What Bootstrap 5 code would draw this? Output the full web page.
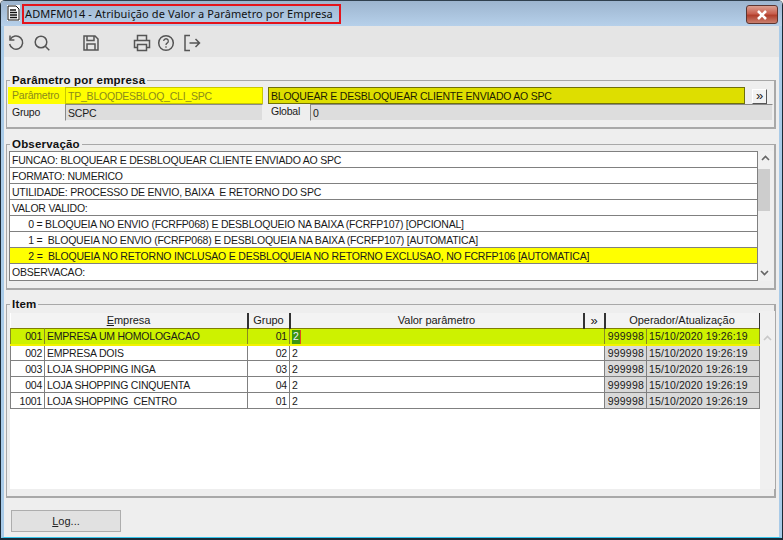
<!DOCTYPE html>
<html lang="pt">
<head>
<meta charset="utf-8">
<title>ADMFM014</title>
<link href="https://cdn.jsdelivr.net/npm/bootstrap@5.3.0/dist/css/bootstrap.min.css" rel="stylesheet">
<style>
html,body{margin:0;padding:0;width:783px;height:540px;overflow:hidden;background:#eee}
body{font-family:"Liberation Sans",Arial,sans-serif;font-size:10.5px;letter-spacing:-.22px;line-height:13px;color:#1a1a1a}
.win{width:783px;height:540px;border:1px solid #1c2a36;border-top-color:#30404e;border-bottom-width:2px;border-radius:5px 5px 0 0;background:#eee;overflow:hidden}
.frame{height:100%;border-left:3px solid #a9cbe8;border-right:3px solid #a9cbe8;border-bottom:1px solid #35c3ea;background:#eee}
.tbar{height:25px;margin:0 -3px;background:linear-gradient(#9db5cf,#b6d0ea);padding:3px 4px 0 6px}
.apic{width:13px;height:16px;background:#fff;margin:1px 2px 0 0}
.ttl{border:2px solid #e4141c;font:11px/15px "Noto Sans",sans-serif;letter-spacing:.1px;color:#111;padding:0 4px 0 1px;height:20px;width:319px;white-space:nowrap}
.xbtn{width:32px;height:19px;margin-top:1px;border:1px solid #5c3530;border-radius:3px;background:linear-gradient(#dba091 0,#c9604f 45%,#b13f2c 55%,#c9806f 100%);color:#fff}
.tools{height:31px;background:#e5e5e5;padding:8px 0 0 3px}
.tools svg{display:block;stroke:#555;fill:none;stroke-width:1.5}
.tb1{margin-right:8px}.tb2{margin-left:31px}.tb3{margin-left:33px}.tb4{margin-left:6px}.tb5{margin-left:8px}
.grp{margin:17px 3px 0 2px;padding:0 1px 1px 1px;border:2px solid #a8a8a8;border-width:1px 2px 2px 1px;min-width:0}
.grp legend{float:none;width:auto;font:bold 11.5px/13px "Liberation Sans",sans-serif;letter-spacing:.2px;color:#111;margin:0 0 0 2px;padding:0 2px}
.g1{height:55px}
.fr{height:17px}
.lbl{width:57px;padding-left:4px;line-height:16px}
.hlb{background:#ff0;color:#8b8b1a}
.fld{height:17px;border:1px solid #8a8a8a;border-bottom-color:#eee;border-right-color:#eee;padding:1px 2px;line-height:15px;background:#ddd;white-space:nowrap}
.f1{width:198px}.f2{width:477px;margin-left:5px;background:#dede00;border-color:#70700a;color:#1d1d00}
.yl{background:#ff0;color:#8b8b1a;border-color:#c8c800}
.mbtn{width:15px;height:15px;margin:2px 0 0 7px;background:#f2f2f2;border:1px solid #fff;border-right-color:#555;border-bottom-color:#555;line-height:11px;text-align:center;font-size:13px}
.glb{width:39px;margin-left:8px;line-height:15px}.f3{width:463px}
.g2{height:152px;margin-top:9px}
.g3{height:200px;margin-top:8px}
.obs{width:751px;margin-left:1px;border:1px solid #808080;border-collapse:collapse;table-layout:fixed;background:#fff}
.obs td{height:16px;padding:0 2px;border-bottom:1px solid #808080;line-height:14px;white-space:pre}
.obs tr:last-child td{height:17px;border-bottom:0}
.hlrow td{background:#ff0;letter-spacing:-.2px}
.sbar{width:15px;background:#f0f0f0;position:relative}
.thumb{position:absolute;left:0;right:3px;top:18px;height:42px;background:#cdcdcd}
.sbar svg{display:block;margin:4px auto 0;stroke:#666;fill:none;stroke-width:1.6}
.sdn{position:absolute;bottom:5px;left:2px}
.gridw{margin:2px 0 0 2px;height:176px;background:#fff;width:750px}
.dg{border-collapse:collapse;table-layout:fixed;width:749px}
.dg th{height:15px;background:#f3f3f3;font-weight:400;text-align:center;border-right:2px solid #333;padding:1px 0 0;font-size:11px;letter-spacing:-.05px;line-height:13px}
.dg th.more{font-size:13px;padding:0}
.dg td{height:16px;padding:1px 2px 0;border:1px solid #808080;line-height:13px;white-space:pre}
.dg td.ar{text-align:right}
.dg td.gy{background:#d9d9d9;letter-spacing:.12px}
.dg td.ar.gy{letter-spacing:.2px}
.sel td,.sel td.gy{background:#cdf200;border-top:1px solid #807f00;border-bottom:2px solid #f2f200;border-left-color:#8a8a20;border-right-color:#8a8a20}
.cur{background:#3a9510;color:#eef;border-right:1px solid #e04a20;padding:0 1px;display:inline-block;height:14px}
.logb{width:110px;height:22px;margin:12px 0 0 7px;background:#e1e1e1;border:1px solid #adadad;line-height:19px;text-align:center;border-radius:0;padding:0;font-size:11px;letter-spacing:0;color:#222}
</style>
</head>
<body>
<div class="win"><div class="frame d-flex flex-column">
  <div class="tbar d-flex align-items-start">
    <div class="apic d-flex"><svg width="13" height="16" viewBox="0 0 13 16"><path d="M1 1h8l3 3v11H1z" fill="#fff" stroke="#111"/><path d="M3 5h6M3 7.5h7M3 10h7M3 12.5h7" stroke="#111" stroke-width="1.4"/></svg></div>
    <div class="ttl">ADMFM014 - Atribuição de Valor a Parâmetro por Empresa</div>
    <div class="flex-grow-1"></div>
    <div class="xbtn d-flex align-items-center justify-content-center"><svg width="12" height="10" viewBox="0 0 12 10"><path d="M2 1l8 8M10 1L2 9" stroke="#fff" stroke-width="2.6"/></svg></div>
  </div>
  <div class="tools d-flex align-items-start">
    <svg class="tb1" width="18" height="18" viewBox="0 0 18 18"><path d="M3.2 5.5A6.6 6.6 0 1 1 2.6 10"/><path d="M3 1.5v4.4h4.4"/></svg>
    <svg width="18" height="18" viewBox="0 0 18 18"><circle cx="8" cy="8" r="5.8"/><path d="M12.3 12.3l4 4"/></svg>
    <svg class="tb2" width="18" height="18" viewBox="0 0 18 18"><path d="M2 2h11l3 3v11H2z"/><path d="M5 2v4.5h7V2M5 16v-6h8v6"/></svg>
    <svg class="tb3" width="18" height="18" viewBox="0 0 18 18"><path d="M4.5 6V1.5h9V6M4.5 13.500H1.500V6.500h15v7h-3"/><path d="M4.500 10.500h9v6h-9z"/></svg>
    <svg class="tb4" width="18" height="18" viewBox="0 0 18 18"><circle cx="9" cy="9" r="7.300"/><path d="M6.700 7a2.300 2.300 0 1 1 3.400 2.100c-.8.500-1.100.9-1.100 1.900" stroke-width="1.300"/><path d="M9 12.300v1.500" stroke-width="1.300"/></svg>
    <svg class="tb5" width="18" height="18" viewBox="0 0 18 18"><path d="M7 1.500H2v15h5"/><path d="M6.500 9H16.500M12.500 5l4 4-4 4"/></svg>
  </div>

  <fieldset class="grp g1">
    <legend>Parâmetro por empresa</legend>
    <div class="fr d-flex">
      <div class="lbl hlb">Parâmetro</div>
      <div class="fld f1 yl">TP_BLOQDESBLOQ_CLI_SPC</div>
      <div class="fld f2">BLOQUEAR E DESBLOQUEAR CLIENTE ENVIADO AO SPC</div>
      <div class="mbtn">»</div>
    </div>
    <div class="fr d-flex">
      <div class="lbl">Grupo</div>
      <div class="fld f1">SCPC</div>
      <div class="glb">Global</div>
      <div class="fld f3">0</div>
    </div>
  </fieldset>

  <fieldset class="grp g2">
    <legend>Observação</legend>
    <div class="d-flex">
      <table class="obs"><tbody>
        <tr><td>FUNCAO: BLOQUEAR E DESBLOQUEAR CLIENTE ENVIADO AO SPC</td></tr>
        <tr><td>FORMATO: NUMERICO</td></tr>
        <tr><td>UTILIDADE: PROCESSO DE ENVIO, BAIXA  E RETORNO DO SPC</td></tr>
        <tr><td>VALOR VALIDO:</td></tr>
        <tr><td>      0 = BLOQUEIA NO ENVIO (FCRFP068) E DESBLOQUEIO NA BAIXA (FCRFP107) [OPCIONAL]</td></tr>
        <tr><td>      1 =  BLOQUEIA NO ENVIO (FCRFP068) E DESBLOQUEIA NA BAIXA (FCRFP107) [AUTOMATICA]</td></tr>
        <tr class="hlrow"><td>      2 =  BLOQUEIA NO RETORNO INCLUSAO E DESBLOQUEIA NO RETORNO EXCLUSAO, NO FCRFP106 [AUTOMATICA]</td></tr>
        <tr><td>OBSERVACAO:</td></tr>
      </tbody></table>
      <div class="sbar flex-shrink-0">
        <div class="thumb"></div>
        <svg width="9" height="6" viewBox="0 0 9 6"><path d="M1 5l3.500-3.500L8 5"/></svg>
        <svg class="sdn" width="9" height="6" viewBox="0 0 9 6"><path d="M1 1l3.500 3.500L8 1"/></svg>
      </div>
    </div>
  </fieldset>

  <fieldset class="grp g3">
    <legend>Item</legend>
    <div class="d-flex">
      <div class="gridw flex-shrink-0">
        <table class="dg">
          <colgroup><col style="width:34px"><col style="width:203px"><col style="width:42px"><col style="width:294px"><col style="width:21px"><col style="width:42px"><col style="width:113px"></colgroup>
          <thead><tr><th colspan="2"><u>E</u>mpresa</th><th>Grupo</th><th>Valor parâmetro</th><th class="more">»</th><th colspan="2">Operador/Atualização</th></tr></thead>
          <tbody>
            <tr class="sel"><td class="ar">001</td><td>EMPRESA UM HOMOLOGACAO</td><td class="ar">01</td><td colspan="2"><span class="cur">2</span></td><td class="gy ar">999998</td><td class="gy">15/10/2020 19:26:19</td></tr>
            <tr><td class="ar">002</td><td>EMPRESA DOIS</td><td class="ar">02</td><td colspan="2">2</td><td class="gy ar">999998</td><td class="gy">15/10/2020 19:26:19</td></tr>
            <tr><td class="ar">003</td><td>LOJA SHOPPING INGA</td><td class="ar">03</td><td colspan="2">2</td><td class="gy ar">999998</td><td class="gy">15/10/2020 19:26:19</td></tr>
            <tr><td class="ar">004</td><td>LOJA SHOPPING CINQUENTA</td><td class="ar">04</td><td colspan="2">2</td><td class="gy ar">999998</td><td class="gy">15/10/2020 19:26:19</td></tr>
            <tr><td class="ar">1001</td><td>LOJA SHOPPING  CENTRO</td><td class="ar">01</td><td colspan="2">2</td><td class="gy ar">999998</td><td class="gy">15/10/2020 19:26:19</td></tr>
          </tbody>
        </table>
      </div>
      <div class="sbar flex-shrink-0"><svg class="mt-4" width="9" height="6" viewBox="0 0 9 6"><path d="M1 5l3.500-3.500L8 5" stroke="#c8c8c8"/></svg></div>
    </div>
  </fieldset>

  <button type="button" class="btn logb"><u>L</u>og...</button>
</div></div>
</body>
</html>
